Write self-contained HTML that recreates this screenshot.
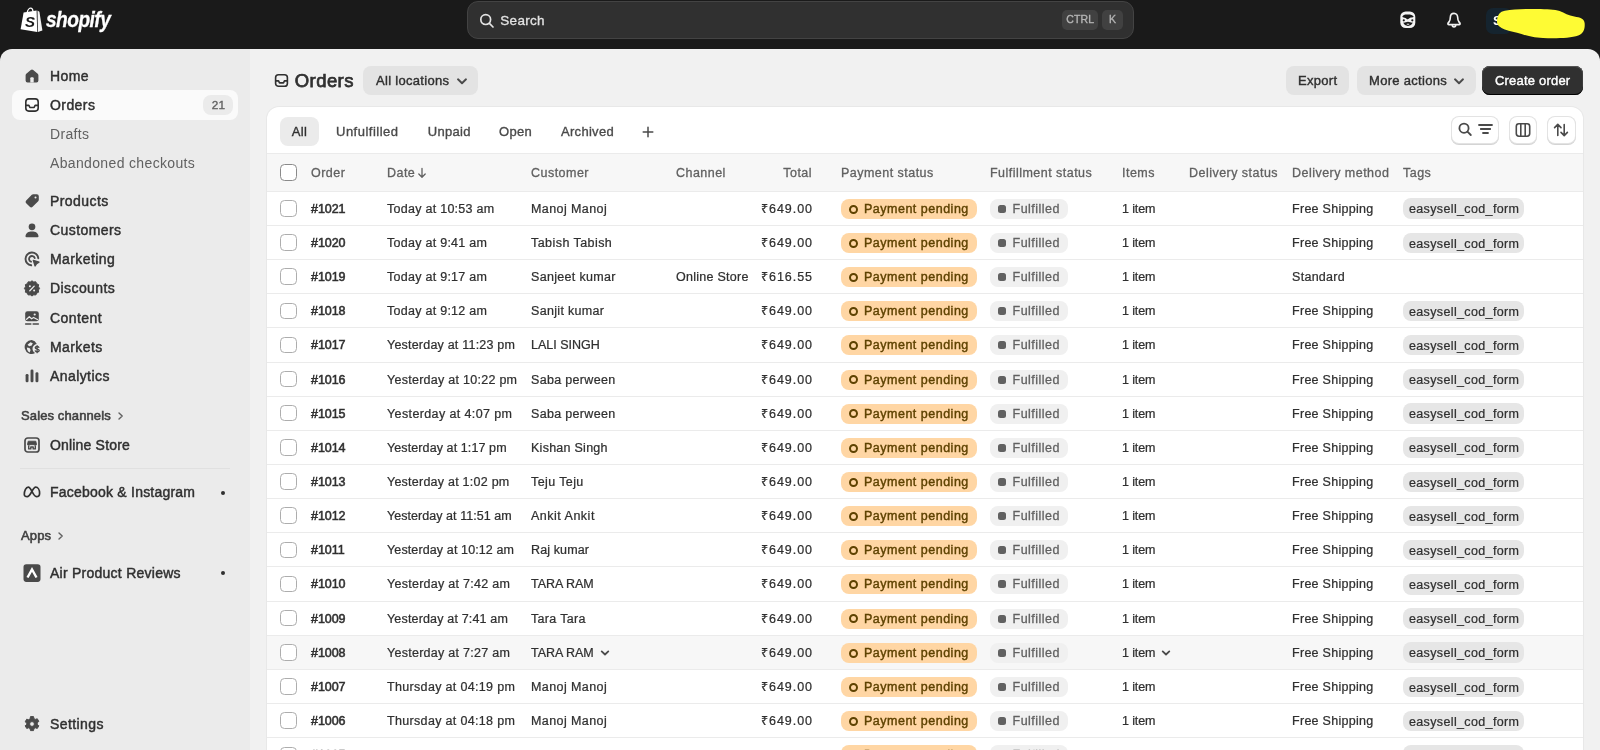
<!DOCTYPE html>
<html lang="en">
<head>
<meta charset="utf-8">
<title>Orders · Shopify</title>
<style>
*{box-sizing:border-box;margin:0;padding:0}
html,body{width:1600px;height:750px;overflow:hidden;background:#1a1a1a;font-family:"Liberation Sans",Arial,sans-serif;color:#303030;font-size:13px}
#app{will-change:transform;position:relative;width:1600px;height:750px;overflow:hidden;background:#1a1a1a}
.abs{position:absolute}
/* top bar */
#top{position:absolute;left:0;top:0;width:1600px;height:49px;background:#1a1a1a}
#logo{position:absolute;left:20px;top:7px;width:24px;height:26px}
#word{position:absolute;left:45.500px;top:8.300px;font-size:21.500px;line-height:24px;font-weight:700;font-style:italic;color:#fff;-webkit-text-stroke:.3px #fff;letter-spacing:-.6px;transform:scaleX(.89);transform-origin:0 0}
#search{position:absolute;left:467px;top:1px;width:667px;height:38px;border-radius:11px;background:#303030;border:1px solid #434343}
#search .t{position:absolute;left:32.300px;top:10.500px;font-size:13.500px;line-height:16px;color:#e3e3e3;font-weight:400;letter-spacing:.3px;-webkit-text-stroke:.3px #e3e3e3}
.kbd{position:absolute;top:7.800px;height:20.600px;border-radius:5px;background:#414141;color:#b5b5b5;font-size:10.500px;line-height:18.600px;text-align:center;letter-spacing:.2px;-webkit-text-stroke:.35px #b5b5b5}
/* frame */
#side{position:absolute;left:0;top:49px;width:250px;height:701px;background:#ebebeb;border-top-left-radius:12px}
#main{position:absolute;left:250px;top:49px;width:1350px;height:701px;background:#f1f1f1;border-top-right-radius:12px}
/* nav */
.nv{position:absolute;left:12px;width:226px;height:30px;border-radius:8px}
.nv svg{position:absolute;left:10px;top:5px;width:20px;height:20px}
.nv .l{position:absolute;left:38px;top:0;line-height:31px;font-size:14px;font-weight:400;-webkit-text-stroke:.45px #303030;color:#303030;white-space:nowrap;letter-spacing:.42px}
.nv.sub .l{top:0;font-weight:400;-webkit-text-stroke:0;color:#616161;letter-spacing:.35px}
.nv.on{background:#fafafa}
.sec{position:absolute;left:21px;font-size:13px;line-height:16px;font-weight:400;-webkit-text-stroke:.55px #404040;color:#404040;white-space:nowrap;letter-spacing:.12px}
.dot{position:absolute;left:221px;width:4px;height:4px;border-radius:2px;background:#303030}
.bdg{position:absolute;left:191px;top:5px;width:30px;height:20px;border-radius:8px;background:#ebebeb;color:#616161;font-size:11.800px;line-height:21.600px;text-align:center;font-weight:400;-webkit-text-stroke:.35px #616161;letter-spacing:.3px;padding-left:1px}
.chv{display:inline-block;margin-left:6px;vertical-align:-1px}

/* page header */
.sb{-webkit-text-stroke:.4px currentColor}
#ttl{position:absolute;left:44.700px;top:20.500px;font-size:18.500px;line-height:22px;font-weight:400;-webkit-text-stroke:.75px #303030;color:#303030;letter-spacing:.45px}
.btn{position:absolute;top:17px;height:29px;border-radius:8px;background:#e3e3e3;color:#303030;font-size:13px;line-height:29px;white-space:nowrap;-webkit-text-stroke:.4px currentColor;letter-spacing:.3px}
.btn.pri{background:#303030;color:#fff;box-shadow:inset 0 1px 0 #555,inset 0 -1px 0 #000,inset 1px 0 0 #3d3d3d,inset -1px 0 0 #3d3d3d}
/* card */
#card{position:absolute;left:17px;top:58px;width:1316px;height:661px;background:#fff;border-radius:12px 12px 0 0;box-shadow:0 0 0 1px #e8e8e8;overflow:hidden}
.tab{position:absolute;top:10px;height:29px;line-height:29px;font-size:13px;color:#4a4a4a;-webkit-text-stroke:.35px currentColor;letter-spacing:.3px;white-space:nowrap}
.tab.on{background:#ebebeb;border-radius:8px;color:#303030;padding:0 12.300px}
.ib{position:absolute;top:9.600px;height:26px;border-radius:7px;background:#fff;box-shadow:0 0 0 1px #e3e3e3,0 1px 0 1px #d4d4d4}
#hd{position:absolute;left:0;top:46px;width:1317px;height:38.750px;background:#f7f7f7;border-top:1px solid #ebebeb;border-bottom:1px solid #ebebeb}
.h{position:absolute;top:0;line-height:39px;font-size:12.500px;color:#616161;-webkit-text-stroke:.3px currentColor;letter-spacing:.47px;white-space:nowrap}
.cb{position:absolute;left:13px;width:16.500px;height:16.500px;border-radius:4.500px;border:1px solid #adadad;background:#fff}
.cb.hc{border-color:#8a8a8a}
.r{position:absolute;left:0;width:1317px;height:34.156px;border-bottom:1px solid #ebebeb}
.r.hv{background:#f7f7f7}
.r span{position:absolute;top:0;line-height:34.600px;font-size:12.500px;color:#303030;white-space:nowrap;letter-spacing:.27px;-webkit-text-stroke:.24px #303030}
.r .o{left:44px;-webkit-text-stroke:.55px #303030;letter-spacing:-.05px}
.r .d{left:120px}.r .c{left:264px;letter-spacing:.32px}.r .ch{left:409px}.r .t{right:772px;text-align:right;letter-spacing:.95px;margin-right:-.95px}
.r .it{left:855px;letter-spacing:-.12px}.r .dm{left:1025px;letter-spacing:.29px}
.r .pp{left:574px;top:7px;width:136px;height:20px;border-radius:8px;background:#ffd6a4;color:#5e4200;line-height:20px;padding-left:23px;-webkit-text-stroke:.4px #5e4200;letter-spacing:.5px}
.r .pp:before{content:"";box-sizing:border-box;position:absolute;left:7.900px;top:5.800px;width:9px;height:9px;border-radius:50%;border:2px solid #5e4200}
.r .ff{left:723px;top:7px;width:78px;height:20px;border-radius:8px;background:#f0f0f0;color:#616161;line-height:20px;padding-left:22.500px;-webkit-text-stroke:.3px #616161;letter-spacing:.49px}
.r .ff:before{content:"";position:absolute;left:8px;top:6px;width:8px;height:8px;border-radius:2.500px;background:#616161}
.r .tg{left:1136px;top:6.600px;width:121.300px;height:20.500px;border-radius:8px;background:#e6e6e6;color:#303030;line-height:23px;padding-left:6px;letter-spacing:.36px}
.cv{display:inline-block;margin-left:6px;vertical-align:0}
</style>
</head>
<body>
<div id="app">
<div id="top">
<svg id="logo" viewBox="0 0 24 26"><path d="M3.6 5.6 16.6 3.4 17.2 25 0.6 22.2Z" fill="#fff"/><path d="M17.5 3.6 19.4 4.8 22.4 23.4 17.9 25Z" fill="#f4f4f4"/><path d="M7.2 5.4C7.8 2.6 9.6 0.9 11 1.2c1.300.3 1.900 1.800 2 3.400" fill="none" stroke="#fff" stroke-width="1.300"/><text x="5.100" y="19.600" font-family="Liberation Sans, Arial, sans-serif" font-size="15" font-weight="700" font-style="italic" fill="#1a1a1a">S</text></svg>
<div id="word">shopify</div>
<div id="search"><svg class="abs" style="left:10px;top:10px" width="18" height="18" viewBox="0 0 18 18" fill="none" stroke="#e3e3e3" stroke-width="1.700" stroke-linecap="round"><circle cx="7.700" cy="7.600" r="4.900"/><path d="M11.400 11.400 15 15"/></svg><div class="t">Search</div>
<div class="kbd" style="left:594.300px;width:36px">CTRL</div><div class="kbd" style="left:634.200px;width:21px">K</div></div>
<svg class="abs" style="left:1397.500px;top:10px" width="20" height="20" viewBox="0 0 20 20"><rect x="2.300" y="1.500" width="15" height="16.600" rx="5.400" fill="#f4f4f4"/><path d="M4.300 6.800c.6-1.700 2.600-2.300 5.200-2.200 2.700-.1 5.400.5 6.200 2.100-.9.900-2.500.600-3.600 1.100-1.100.5-1.600 1.400-2.500 1.400s-1.300-.9-2.300-1.300C6.400 7.500 5 7.700 4.300 6.800Z" fill="#1a1a1a"/><circle cx="5.800" cy="10.300" r="1.100" fill="#1a1a1a"/><circle cx="14.300" cy="10.300" r="1.100" fill="#1a1a1a"/><path d="M5.200 12.600c1.500.4 3.300-.9 4.800-.9s3.300 1.300 4.800.9c-.6 2-2.600 3.300-4.800 3.300s-4.200-1.300-4.800-3.300Z" fill="#1a1a1a"/><path d="M8.500 14c.5-.5 2.500-.5 3 0-.3.900-2.700.9-3 0Z" fill="#f4f4f4"/></svg>
<svg class="abs" style="left:1443.600px;top:10px" width="20" height="20" viewBox="0 0 20 20" fill="none" stroke="#f1f1f1" stroke-width="1.800" stroke-linejoin="round" stroke-linecap="round"><g transform="translate(10 0) scale(.9 1) translate(-10 0)"><path d="M10 3.300c-2.500 0-4.100 1.900-4.100 4.300 0 2.200-.5 3.400-1.500 4.400-.8.800-1.200 1.300-1.200 1.800s.4.800 1 .800h11.600c.6 0 1-.3 1-.8s-.4-1-1.200-1.800c-1-1-1.500-2.200-1.500-4.400 0-2.400-1.600-4.300-4.100-4.300Z"/><path d="M8.100 15c0 1.100.8 1.900 1.900 1.900s1.900-.8 1.900-1.900"/></g></svg>
<div class="abs" style="left:1486px;top:8px;width:26px;height:26px;border-radius:7px;background:#15242f;color:#fff;font-size:13px;font-weight:700;line-height:26px;padding-left:7px">S</div>
<svg class="abs" style="left:1496px;top:6px" width="94" height="36" viewBox="0 0 96 36" preserveAspectRatio="none"><path d="M1 15C1.500 9 4 5.500 9 4.800C18 3.300 30 2.800 42 3C52 3.200 60 3.300 65 5C70 7 74 9.500 80 10.500C86 11.500 90 12.500 90.500 17C91 22 90 27 84 29.500C76 32.300 60 32.500 48 32C38 31.500 32 30 26 28C20 26 14 25.500 9 23.500C4 21.500 .700 19 1 15Z" fill="#fefb34"/></svg>
</div>
<div id="side">
<div class="nv " style="top:12px"><svg viewBox="0 0 20 20"><path d="M10 5.500 5.500 9.200V14.500H14.500V9.200Z" fill="#4a4a4a" stroke="#4a4a4a" stroke-width="3.800" stroke-linejoin="round"/><path d="M8.300 16.600V12.300a1.100 1.100 0 0 1 1.100-1.100h1.200a1.100 1.100 0 0 1 1.100 1.100V16.600Z" fill="#ebebeb"/></svg><span class="l">Home</span></div>
<div class="nv on" style="top:41px"><svg viewBox="0 0 20 20" fill="none" stroke="#303030" stroke-width="1.600" stroke-linejoin="round"><rect x="3.800" y="3.900" width="12.400" height="12.200" rx="3"/><path d="M3.800 10.400h3.100l1 2.100h4.200l1-2.100h3.100"/></svg><span class="l">Orders</span><span class="bdg">21</span></div>
<div class="nv sub" style="top:70px"><span class="l">Drafts</span></div>
<div class="nv sub" style="top:99px"><span class="l">Abandoned checkouts</span></div>
<div class="nv " style="top:137px"><svg viewBox="0 0 20 20"><path fill-rule="evenodd" d="M11.200 3.200h3.600a2 2 0 0 1 2 2v3.600a2 2 0 0 1-.59 1.410l-5.600 5.600a2 2 0 0 1-2.820 0l-3.600-3.600a2 2 0 0 1 0-2.820l5.600-5.600a2 2 0 0 1 1.410-.59Zm2.300 4.300a1 1 0 1 0 0-2 1 1 0 0 0 0 2Z" fill="#4a4a4a"/></svg><span class="l">Products</span></div>
<div class="nv " style="top:166px"><svg viewBox="0 0 20 20" fill="#4a4a4a"><circle cx="10" cy="6.800" r="3.350"/><path d="M3.500 16c.4-3.100 3-4.500 6.500-4.500s6.100 1.400 6.500 4.500a1.100 1.100 0 0 1-1.100 1.300H4.600a1.100 1.100 0 0 1-1.100-1.300Z"/></svg><span class="l">Customers</span></div>
<div class="nv " style="top:195px"><svg viewBox="0 0 20 20" fill="none" stroke="#4a4a4a" stroke-width="1.900" stroke-linecap="round"><path d="M16.300 9.200A6.400 6.400 0 1 0 9.200 16.300"/><path d="M12.700 9A2.900 2.900 0 1 0 9 12.700"/><path d="M11.300 11.300 17 13.100 14.600 14.600 13.100 17Z" fill="#4a4a4a" stroke-width="1.300" stroke-linejoin="round"/></svg><span class="l">Marketing</span></div>
<div class="nv " style="top:224px"><svg viewBox="0 0 20 20"><path d="M10 2.800l1.700 1.200 2.100-.2.900 1.900 1.900.9-.2 2.100L17.600 10.400l-1.200 1.700.2 2.100-1.900.9-.9 1.900-2.100-.2L10 18l-1.700-1.200-2.100.2-.9-1.900-1.900-.9.2-2.100L2.400 10.400l1.200-1.700-.2-2.100 1.900-.9.900-1.900 2.100.2Z" fill="#4a4a4a" stroke="#4a4a4a" stroke-width="1" stroke-linejoin="round"/><path d="M7.800 12.700 12.200 8.100" stroke="#ebebeb" stroke-width="1.300" stroke-linecap="round"/><circle cx="7.900" cy="8.300" r="1" fill="#ebebeb"/><circle cx="12.100" cy="12.500" r="1" fill="#ebebeb"/></svg><span class="l">Discounts</span></div>
<div class="nv " style="top:253.5px"><svg viewBox="0 0 20 20"><rect x="3.200" y="3.300" width="13.600" height="10" rx="2.300" fill="#4a4a4a"/><path d="M4.600 11.300 7.300 8.700 9.600 10.800 11.600 9.400 15.400 11.600" fill="none" stroke="#ebebeb" stroke-width="1.200" stroke-linejoin="round" stroke-linecap="round"/><circle cx="12.700" cy="6.500" r="1.100" fill="#ebebeb"/><path d="M3.700 16h5.100M11.200 16h5.100" stroke="#4a4a4a" stroke-width="1.600" stroke-linecap="round"/></svg><span class="l">Content</span></div>
<div class="nv " style="top:283px"><svg viewBox="0 0 20 20"><path fill-rule="evenodd" d="M9.700 3a7 7 0 1 0 3.400 13.100c-1.600-.9-2.600-2.500-2.600-4.300 0-2.400 1.800-4.400 4.300-4.800A7 7 0 0 0 9.700 3Zm-1.200 2.200 2.300 1-1.100 2.300-2.500.7-1.700-1.500Zm-3.600 5.300 2.600.4 1.100 2.200-.9 2.400C5.800 14.700 4.800 12.800 4.900 10.500Z" fill="#4a4a4a"/><path d="M16.900 10.300c-.5-.6-1.300-.9-2.100-.8-1 .1-1.600.7-1.500 1.400.2 1.600 3.700.7 3.900 2.400.1.800-.6 1.400-1.600 1.500-.9.100-1.800-.2-2.300-.9M15.100 8.600v7.100" fill="none" stroke="#4a4a4a" stroke-width="1.300" stroke-linecap="round"/></svg><span class="l">Markets</span></div>
<div class="nv " style="top:312px"><svg viewBox="0 0 20 20" fill="#4a4a4a"><rect x="3.600" y="8" width="2.900" height="8.300" rx="1.300"/><rect x="8.550" y="3.500" width="2.900" height="12.800" rx="1.300"/><rect x="13.500" y="6.300" width="2.900" height="10" rx="1.300"/></svg><span class="l">Analytics</span></div>
<div class="sec" style="top:358.800px">Sales channels<svg class="chv" width="8" height="10" viewBox="0 0 8 10" fill="none" stroke="#616161" stroke-width="1.400" stroke-linecap="round" stroke-linejoin="round"><path d="M2 2 5.200 5 2 8"/></svg></div>
<div class="nv " style="top:381px"><svg viewBox="0 0 20 20" fill="none" stroke="#4a4a4a" stroke-width="1.700" stroke-linejoin="round"><rect x="3" y="3" width="14" height="14" rx="2.800"/><path d="M6.200 6.200h7.600l.7 2.800a1.250 1.250 0 0 1-2.500.3 1.250 1.250 0 0 1-2 0 1.250 1.250 0 0 1-2 0 1.250 1.250 0 0 1-2.500-.3Z" fill="#4a4a4a" stroke-width=".8"/><path d="M6.700 11v2.900h2.100v-1.900h2.400v1.900h2.100V11" stroke-width="1.400"/></svg><span class="l" style="letter-spacing:.18px">Online Store</span></div>
<div class="abs" style="left:20px;top:419px;width:210px;height:1px;background:#e0e0e0"></div>
<div class="nv " style="top:428px"><svg viewBox="0 0 20 20" fill="none" stroke="#303030" stroke-width="1.700" stroke-linecap="round" stroke-linejoin="round"><path d="M2.300 12.600c0-3.900 1.700-7.400 4-7.400 3 0 4.700 9.500 8.100 9.500 1.800 0 3.200-1.300 3.200-3.500 0-3.300-1.700-6-3.900-6-3 0-5.100 9.500-8.500 9.500-1.800 0-2.900-.8-2.900-2.100Z"/></svg><span class="l" style="letter-spacing:.22px">Facebook &amp; Instagram</span><span class="dot" style="left:209px;top:13.500px"></span></div>
<div class="sec" style="top:479px">Apps<svg class="chv" width="8" height="10" viewBox="0 0 8 10" fill="none" stroke="#616161" stroke-width="1.400" stroke-linecap="round" stroke-linejoin="round"><path d="M2 2 5.200 5 2 8"/></svg></div>
<div class="nv " style="top:508.5px"><svg viewBox="0 0 20 20"><rect x="1.500" y="1.300" width="17" height="17.600" rx="2.800" fill="#4a4a4a"/><path d="M5.500 14.500 10 6.500l4.500 8" fill="none" stroke="#fff" stroke-width="2.400" stroke-linejoin="miter"/></svg><span class="l" style="letter-spacing:.25px">Air Product Reviews</span><span class="dot" style="left:209px;top:13.500px"></span></div>
<div class="nv " style="top:659.5px"><svg viewBox="0 0 20 20"><path fill-rule="evenodd" d="M8.500 2.600h3l.5 2.100 1.200.7 2.100-.6 1.500 2.600-1.600 1.500v1.400l1.600 1.500-1.500 2.600-2.100-.6-1.200.7-.5 2.100h-3l-.5-2.100-1.200-.7-2.100.6-1.500-2.600 1.600-1.500V9.300L3.200 7.800l1.500-2.600 2.100.6L8 5.100Zm1.500 9.800a2.400 2.400 0 1 0 0-4.800 2.400 2.400 0 0 0 0 4.800Z" fill="#4a4a4a" stroke="#4a4a4a" stroke-width="1" stroke-linejoin="round"/></svg><span class="l">Settings</span></div>
</div>
<div id="main">
<svg class="abs" style="left:21.800px;top:22.200px" width="19" height="19" viewBox="0 0 20 20" fill="none" stroke="#303030" stroke-width="1.700" stroke-linejoin="round"><rect x="3.800" y="3.900" width="12.400" height="12.200" rx="3"/><path d="M3.800 10.400h3.100l1 2.100h4.200l1-2.100h3.100"/></svg>
<div id="ttl">Orders</div>
<div class="btn" style="left:113px;width:115px;padding-left:13px">All locations<svg class="abs" style="left:93px;top:11px" width="12" height="9" viewBox="0 0 12 9" fill="none" stroke="#4a4a4a" stroke-width="1.900" stroke-linecap="round" stroke-linejoin="round"><path d="M2 2.300 6 6.200 10 2.300"/></svg></div>
<div class="btn" style="left:1036px;width:63px;padding-left:12px">Export</div>
<div class="btn" style="left:1107px;width:119px;padding-left:12px">More actions<svg class="abs" style="left:95.500px;top:11px" width="12" height="9" viewBox="0 0 12 9" fill="none" stroke="#4a4a4a" stroke-width="1.900" stroke-linecap="round" stroke-linejoin="round"><path d="M2 2.300 6 6.200 10 2.300"/></svg></div>
<div class="btn pri" style="left:1232px;width:101px;padding-left:13px;letter-spacing:.2px">Create order</div>
<div id="card">
<div class="tab on" style="left:12.500px">All</div><div class="tab" style="left:69px;letter-spacing:.5px">Unfulfilled</div><div class="tab" style="left:160.700px">Unpaid</div><div class="tab" style="left:232px">Open</div><div class="tab" style="left:294px">Archived</div>
<svg class="abs" style="left:375px;top:19px" width="12" height="12" viewBox="0 0 12 12" stroke="#4a4a4a" stroke-width="1.500" stroke-linecap="round"><path d="M6 1.200v9.600M1.200 6h9.600"/></svg>
<div class="ib" style="left:1184.500px;width:46.500px"><svg class="abs" style="left:4px;top:3.500px" width="38" height="18" viewBox="0 0 38 18" fill="none" stroke="#4a4a4a" stroke-width="1.800" stroke-linecap="round"><circle cx="8" cy="8.200" r="4.600"/><path d="M11.500 11.700 14.800 15"/><path d="M23 5h13M24.800 9h9.400M27 13h5"/></svg></div>
<div class="ib" style="left:1243px;width:26px"><svg class="abs" style="left:3px;top:3px" width="20" height="20" viewBox="0 0 20 20" fill="none" stroke="#4a4a4a" stroke-width="1.600" stroke-linejoin="round"><rect x="3.300" y="3.800" width="13.400" height="12.400" rx="2.600"/><path d="M7.800 3.800v12.400M12.200 3.800v12.400"/></svg></div>
<div class="ib" style="left:1281px;width:26.500px"><svg class="abs" style="left:3.200px;top:3px" width="20" height="20" viewBox="0 0 20 20" fill="none" stroke="#4a4a4a" stroke-width="1.600" stroke-linecap="round" stroke-linejoin="round"><path d="M6.800 15.500V4.500M3.600 7.600 6.800 4.400 10 7.600M13.200 4.500v11M10 12.400l3.200 3.200 3.200-3.200"/></svg></div>
<div id="hd"><div class="cb hc" style="top:10.300px"></div><div class="h" style="left:44px">Order</div><div class="h" style="left:120px">Date<svg class="abs" style="left:30px;top:13px" width="10" height="12" viewBox="0 0 10 12" fill="none" stroke="#616161" stroke-width="1.300" stroke-linecap="round" stroke-linejoin="round"><path d="M5 1.500v8.500M1.800 7 5 10.200 8.200 7"/></svg></div><div class="h" style="left:264px">Customer</div><div class="h" style="left:409px">Channel</div><div class="h" style="left:574px">Payment status</div><div class="h" style="left:723px">Fulfillment status</div><div class="h" style="left:855px">Items</div><div class="h" style="left:922px">Delivery status</div><div class="h" style="left:1025px">Delivery method</div><div class="h" style="left:1136px">Tags</div><div class="h" style="right:772px">Total</div></div>
<div class="r" style="top:84.75px"><div class="cb" style="top:8.300px"></div><span class="o">#1021</span><span class="d">Today at 10:53 am</span><span class="c" style="letter-spacing:0.42px">Manoj Manoj</span><span class="ch"></span><span class="t">₹649.00</span><span class="pp">Payment pending</span><span class="ff">Fulfilled</span><span class="it">1 item</span><span class="dm">Free Shipping</span><span class="tg">easysell_cod_form</span></div>
<div class="r" style="top:118.91px"><div class="cb" style="top:8.300px"></div><span class="o">#1020</span><span class="d">Today at 9:41 am</span><span class="c" style="letter-spacing:0.44px">Tabish Tabish</span><span class="ch"></span><span class="t">₹649.00</span><span class="pp">Payment pending</span><span class="ff">Fulfilled</span><span class="it">1 item</span><span class="dm">Free Shipping</span><span class="tg">easysell_cod_form</span></div>
<div class="r" style="top:153.06px"><div class="cb" style="top:8.300px"></div><span class="o">#1019</span><span class="d">Today at 9:17 am</span><span class="c">Sanjeet kumar</span><span class="ch">Online Store</span><span class="t">₹616.55</span><span class="pp">Payment pending</span><span class="ff">Fulfilled</span><span class="it">1 item</span><span class="dm">Standard</span></div>
<div class="r" style="top:187.22px"><div class="cb" style="top:8.300px"></div><span class="o">#1018</span><span class="d">Today at 9:12 am</span><span class="c">Sanjit kumar</span><span class="ch"></span><span class="t">₹649.00</span><span class="pp">Payment pending</span><span class="ff">Fulfilled</span><span class="it">1 item</span><span class="dm">Free Shipping</span><span class="tg">easysell_cod_form</span></div>
<div class="r" style="top:221.37px"><div class="cb" style="top:8.300px"></div><span class="o">#1017</span><span class="d" style="letter-spacing:0.21px">Yesterday at 11:23 pm</span><span class="c" style="letter-spacing:0">LALI SINGH</span><span class="ch"></span><span class="t">₹649.00</span><span class="pp">Payment pending</span><span class="ff">Fulfilled</span><span class="it">1 item</span><span class="dm">Free Shipping</span><span class="tg">easysell_cod_form</span></div>
<div class="r" style="top:255.53px"><div class="cb" style="top:8.300px"></div><span class="o">#1016</span><span class="d">Yesterday at 10:22 pm</span><span class="c">Saba perween</span><span class="ch"></span><span class="t">₹649.00</span><span class="pp">Payment pending</span><span class="ff">Fulfilled</span><span class="it">1 item</span><span class="dm">Free Shipping</span><span class="tg">easysell_cod_form</span></div>
<div class="r" style="top:289.69px"><div class="cb" style="top:8.300px"></div><span class="o">#1015</span><span class="d" style="letter-spacing:0.38px">Yesterday at 4:07 pm</span><span class="c">Saba perween</span><span class="ch"></span><span class="t">₹649.00</span><span class="pp">Payment pending</span><span class="ff">Fulfilled</span><span class="it">1 item</span><span class="dm">Free Shipping</span><span class="tg">easysell_cod_form</span></div>
<div class="r" style="top:323.84px"><div class="cb" style="top:8.300px"></div><span class="o">#1014</span><span class="d" style="letter-spacing:0.10px">Yesterday at 1:17 pm</span><span class="c" style="letter-spacing:0.26px">Kishan Singh</span><span class="ch"></span><span class="t">₹649.00</span><span class="pp">Payment pending</span><span class="ff">Fulfilled</span><span class="it">1 item</span><span class="dm">Free Shipping</span><span class="tg">easysell_cod_form</span></div>
<div class="r" style="top:358.00px"><div class="cb" style="top:8.300px"></div><span class="o">#1013</span><span class="d" style="letter-spacing:0.24px">Yesterday at 1:02 pm</span><span class="c" style="letter-spacing:0.40px">Teju Teju</span><span class="ch"></span><span class="t">₹649.00</span><span class="pp">Payment pending</span><span class="ff">Fulfilled</span><span class="it">1 item</span><span class="dm">Free Shipping</span><span class="tg">easysell_cod_form</span></div>
<div class="r" style="top:392.15px"><div class="cb" style="top:8.300px"></div><span class="o">#1012</span><span class="d" style="letter-spacing:0.05px">Yesterday at 11:51 am</span><span class="c" style="letter-spacing:0.50px">Ankit Ankit</span><span class="ch"></span><span class="t">₹649.00</span><span class="pp">Payment pending</span><span class="ff">Fulfilled</span><span class="it">1 item</span><span class="dm">Free Shipping</span><span class="tg">easysell_cod_form</span></div>
<div class="r" style="top:426.31px"><div class="cb" style="top:8.300px"></div><span class="o">#1011</span><span class="d" style="letter-spacing:0.12px">Yesterday at 10:12 am</span><span class="c" style="letter-spacing:0.12px">Raj kumar</span><span class="ch"></span><span class="t">₹649.00</span><span class="pp">Payment pending</span><span class="ff">Fulfilled</span><span class="it">1 item</span><span class="dm">Free Shipping</span><span class="tg">easysell_cod_form</span></div>
<div class="r" style="top:460.47px"><div class="cb" style="top:8.300px"></div><span class="o">#1010</span><span class="d">Yesterday at 7:42 am</span><span class="c" style="letter-spacing:-.05px">TARA RAM</span><span class="ch"></span><span class="t">₹649.00</span><span class="pp">Payment pending</span><span class="ff">Fulfilled</span><span class="it">1 item</span><span class="dm">Free Shipping</span><span class="tg">easysell_cod_form</span></div>
<div class="r" style="top:494.62px"><div class="cb" style="top:8.300px"></div><span class="o">#1009</span><span class="d" style="letter-spacing:0.17px">Yesterday at 7:41 am</span><span class="c">Tara Tara</span><span class="ch"></span><span class="t">₹649.00</span><span class="pp">Payment pending</span><span class="ff">Fulfilled</span><span class="it">1 item</span><span class="dm">Free Shipping</span><span class="tg">easysell_cod_form</span></div>
<div class="r hv" style="top:528.78px"><div class="cb" style="top:8.300px"></div><span class="o">#1008</span><span class="d">Yesterday at 7:27 am</span><span class="c" style="letter-spacing:-.05px">TARA RAM<svg class="cv" width="10" height="8" viewBox="0 0 10 8" fill="none" stroke="#4a4a4a" stroke-width="1.800" stroke-linecap="round" stroke-linejoin="round"><path d="M1.700 2.400 5 5.500 8.300 2.400"/></svg></span><span class="ch"></span><span class="t">₹649.00</span><span class="pp">Payment pending</span><span class="ff">Fulfilled</span><span class="it">1 item<svg class="cv" width="10" height="8" viewBox="0 0 10 8" fill="none" stroke="#4a4a4a" stroke-width="1.800" stroke-linecap="round" stroke-linejoin="round"><path d="M1.700 2.400 5 5.500 8.300 2.400"/></svg></span><span class="dm">Free Shipping</span><span class="tg">easysell_cod_form</span></div>
<div class="r" style="top:562.93px"><div class="cb" style="top:8.300px"></div><span class="o">#1007</span><span class="d" style="letter-spacing:0.33px">Thursday at 04:19 pm</span><span class="c" style="letter-spacing:0.42px">Manoj Manoj</span><span class="ch"></span><span class="t">₹649.00</span><span class="pp">Payment pending</span><span class="ff">Fulfilled</span><span class="it">1 item</span><span class="dm">Free Shipping</span><span class="tg">easysell_cod_form</span></div>
<div class="r" style="top:597.09px"><div class="cb" style="top:8.300px"></div><span class="o">#1006</span><span class="d" style="letter-spacing:0.33px">Thursday at 04:18 pm</span><span class="c" style="letter-spacing:0.42px">Manoj Manoj</span><span class="ch"></span><span class="t">₹649.00</span><span class="pp">Payment pending</span><span class="ff">Fulfilled</span><span class="it">1 item</span><span class="dm">Free Shipping</span><span class="tg">easysell_cod_form</span></div>
<div class="r" style="top:631.25px"><div class="cb" style="top:8.300px"></div><span class="o">#1005</span><span class="d" style="letter-spacing:0.33px">Thursday at 04:02 pm</span><span class="c" style="letter-spacing:0.42px">Manoj Manoj</span><span class="ch"></span><span class="t">₹649.00</span><span class="pp">Payment pending</span><span class="ff">Fulfilled</span><span class="it">1 item</span><span class="dm">Free Shipping</span><span class="tg">easysell_cod_form</span></div>
</div>
</div>
</div>
</body>
</html>
